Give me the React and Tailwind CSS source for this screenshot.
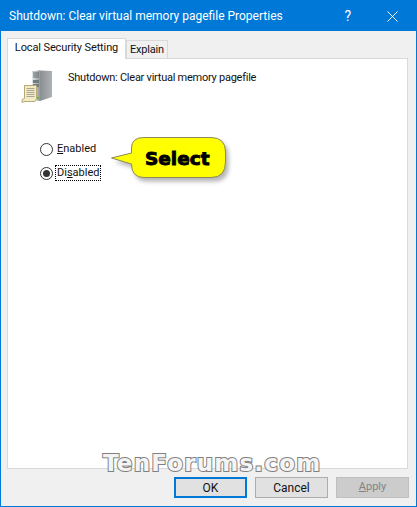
import React from "react";

function ServerIcon() {
  return (
    <svg width="34" height="34" viewBox="0 0 34 34" className="block">
      <defs>
        <linearGradient id="side" x1="0" x2="1" y1="0" y2="0">
          <stop offset="0" stopColor="#73787c" />
          <stop offset="1" stopColor="#aeb1b3" />
        </linearGradient>
        <linearGradient id="front" x1="0" x2="1" y1="0" y2="0">
          <stop offset="0" stopColor="#e4e8e8" />
          <stop offset="1" stopColor="#929a9e" />
        </linearGradient>
      </defs>
      <path d="M11 1.5 L19 0.5 L31 1 L31 27 L19 31 L11 29 Z" fill="url(#side)" />
      <path d="M11 1.5 L19 0.5 L19 31 L11 29 Z" fill="url(#front)" />
      <path d="M12 3h6M12 5h6M12 7h6" stroke="#5f686c" strokeWidth="1" />
      <path d="M12 10h6v3h-6zM12 14h6v3h-6z" fill="#6f7b80" />
      <path d="M16 27h2v2h-2z" fill="#58c43c" />
      <path d="M3.5 15.5 L15.5 15.5 L15.5 29 L14 31.5 L3 31.5 L1 32.5 L1 29.5 L3.5 28.5 Z" fill="#f3ebc6" stroke="#b9a878" strokeWidth="1" />
      <path d="M5.5 18.5h8M5.5 20.5h8M5.5 22.5h8M5.5 24.5h8M5.5 26.5h8" stroke="#a9a592" strokeWidth="1" />
    </svg>
  );
}

const BUBBLE =
  "M20.5 11 Q20.5 0.5 33 0.5 L100 0.5 Q114.5 0.5 114.5 15 L114.5 25 Q114.5 40.5 100 40.5 L33 40.5 Q20.5 40.5 20.5 27 L0.5 21 L20.5 16 Z";

function Bubble() {
  return (
    <svg width="120" height="50" viewBox="0 0 120 50" className="absolute left-0 top-0 overflow-visible">
      <path d={BUBBLE} fill="#6a6a6a" opacity="0.5" transform="translate(3 4)" style={{ filter: "blur(2px)" }} />
      <path d={BUBBLE} fill="#ffff00" stroke="#8a8a5a" strokeWidth="1" />
    </svg>
  );
}

function Radio({ checked, children, focus }) {
  return (
    <div className="flex h-[14px] items-center">
      <span className="flex h-[13px] w-[13px] shrink-0 items-center justify-center rounded-full border border-[#333333] bg-white">
        {checked && <span className="h-[7px] w-[7px] rounded-full bg-[#333333]" />}
      </span>
      <span
        className={
          "ml-[3px] px-[1px] text-[11px] leading-[14px] text-[#111111] " +
          (focus ? "outline-1 outline-dotted outline-[#000000]" : "")
        }
      >
        {children}
      </span>
    </div>
  );
}

function Btn({ children, cls }) {
  return <div className={"flex h-[21px] w-[73px] items-center justify-center " + cls}>{children}</div>;
}

export default function App() {
  return (
    <div
      className="relative flex h-[507px] w-[417px] flex-col overflow-hidden border border-[#0078d7] bg-[#f0f0f0] text-[#111111]"
      style={{ fontFamily: 'Roboto, "Liberation Sans", sans-serif' }}
    >
      <div className="flex h-[30px] shrink-0 items-center bg-[#0078d7] text-white">
        <span className="ml-[8px] text-[12px]">Shutdown: Clear virtual memory pagefile Properties</span>
        <span className="ml-auto text-[14px]">?</span>
        <svg width="11" height="11" viewBox="0 0 11 11" className="ml-[36px] mr-[18px]">
          <path d="M0.5 0.5 L10.5 10.5 M10.5 0.5 L0.5 10.5" stroke="#ffffff" strokeWidth="1" />
        </svg>
      </div>

      <div className="flex h-[27px] shrink-0 items-end pl-[6px] pt-[7px]">
        <div className="relative z-10 -mb-px flex h-[21px] w-[119px] items-center justify-center whitespace-nowrap border border-b-0 border-[#d9d9d9] bg-white pb-[1px] text-[11px] tracking-[-0.12px]">
          Local Security Setting
        </div>
        <div className="flex h-[18px] w-[42px] items-center justify-center border border-b-0 border-[#d9d9d9] bg-[#f0f0f0] pt-[1px] text-[11px] tracking-[-0.2px]">
          Explain
        </div>
      </div>

      <div className="relative ml-[6px] mr-[8px] h-[411px] shrink-0 border border-[#d9d9d9] bg-white">
        <div className="flex pl-[13px] pt-[11px]">
          <ServerIcon />
          <span className="ml-[13px] text-[11px] leading-[16px] tracking-[-0.25px]">
            Shutdown: Clear virtual memory pagefile
          </span>
        </div>
        <div className="ml-[32px] mt-[38px] flex flex-col gap-[10px]">
          <Radio>
            <u>E</u>nabled
          </Radio>
          <Radio checked focus>
            Di<u>s</u>abled
          </Radio>
        </div>
      </div>

      <div className="flex flex-1 items-start justify-end gap-2 pr-[7px] pt-[8px]">
        <Btn cls="border-2 border-[#0078d7] bg-[#e1e1e1] text-[12px]">OK</Btn>
        <Btn cls="border border-[#adadad] bg-[#e1e1e1] text-[12px]">Cancel</Btn>
        <Btn cls="border border-[#bfbfbf] bg-[#cccccc] text-[11px] text-[#838383]">
          <span>
            <u>A</u>pply
          </span>
        </Btn>
      </div>

      <div className="absolute left-[110px] top-[136px] h-[41px] w-[116px]">
        <Bubble />
        <span
          className="absolute left-[34px] top-[10px] text-[18.5px] font-bold leading-[24px] text-black [-webkit-text-stroke:0.9px_#000000]"
          style={{ fontFamily: '"DejaVu Sans", sans-serif' }}
        >
          Select
        </span>
      </div>

      <div
        className="absolute left-[102px] top-[448px] text-[23px] font-bold leading-[28px] tracking-[1.2px] text-[#f4f4f4] [paint-order:stroke_fill] [-webkit-text-stroke:2px_#808080]"
        style={{ fontFamily: '"DejaVu Sans", sans-serif' }}
      >
        TenForums.com
      </div>
    </div>
  );
}
